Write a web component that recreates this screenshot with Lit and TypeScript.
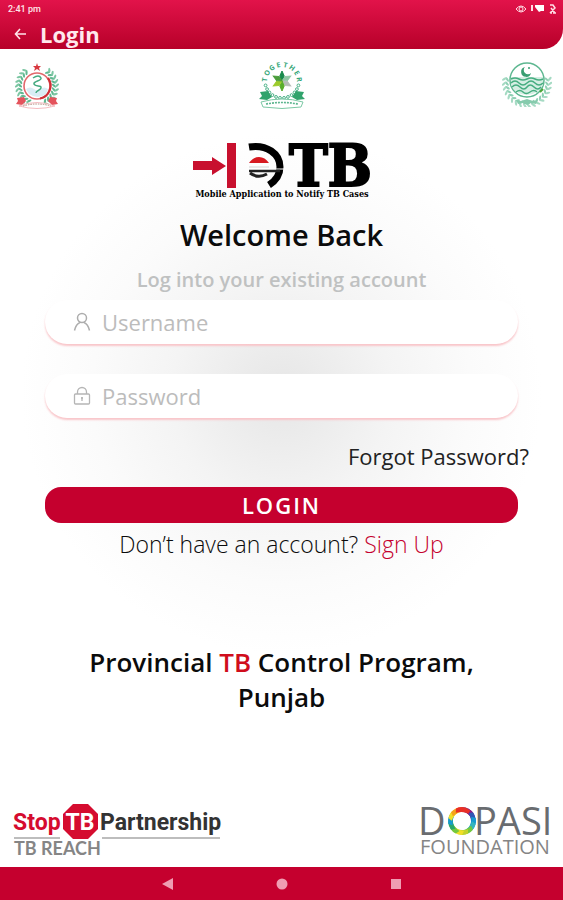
import { LitElement, html, css, svg } from "lit";
import { customElement } from "lit/decorators.js";

const ring = (n: number, start: number, end: number, draw: (a: number, i: number) => unknown) =>
  Array.from({ length: n }, (_, i) => draw(start + ((end - start) * i) / (n - 1), i));

const at = (cx: number, cy: number, r: number, deg: number) => {
  const t = (deg * Math.PI) / 180;
  return { x: cx + r * Math.cos(t), y: cy + r * Math.sin(t) };
};

const leaf = (cx: number, cy: number, r: number, a: number, tilt: number, fill: string) => {
  const p = at(cx, cy, r, a);
  return svg`<ellipse cx=${p.x} cy=${p.y} rx="2.6" ry="1.1" fill=${fill}
    transform="rotate(${a + tilt} ${p.x} ${p.y})"/>`;
};

@customElement("health-seal")
export class HealthSeal extends LitElement {
  static styles = css`:host, svg { display: block; }`;
  render() {
    return html`<svg width="48" height="50" viewBox="0 0 48 50" role="img" aria-label="Health department seal">
      ${ring(10, 118, 232, (a) => svg`${leaf(24, 25, 17, a, 40, "#5fb890")}${leaf(24, 25, 20, a, -40, "#7cc6a3")}`)}
      ${ring(10, -52, 62, (a) => svg`${leaf(24, 25, 17, a, 40, "#5fb890")}${leaf(24, 25, 20, a, -40, "#7cc6a3")}`)}
      <circle cx="24" cy="25" r="13" fill="#fff" stroke="#e2686c" stroke-width="1.6"/>
      <path d="M35 17a13 13 0 0 1-8 20.500" fill="none" stroke="#cf3038" stroke-width="2.200"/>
      <path d="M13 28q4-3 8 0t7 0 7 0l-2 5q-8 6-17 0z" fill="#d9edf5"/>
      <path d="M20 17q6-4 8 0c1 3-8 3-7 6s8 1 7 4-5 2-5 5" fill="none" stroke="#45aa80" stroke-width="1.500"/>
      <path d="M24 2l1 3h3l-2 2 1 3-3-2-3 2 1-3-2-2h3z" fill="#d83840"/>
      <path d="M4 37l7-1 2 4-4 4-6-1 2-3zM44 37l-7-1-2 4 4 4 6-1-2-3z" fill="#e4535c"/>
      <path d="M6 45q18-7 36 0-18 5-36 0z" fill="#fff" stroke="#f3a9b0" stroke-width=".8"/>
      <path d="M10 45q14-4 28 0" fill="none" stroke="#b5897b" stroke-width="1" stroke-dasharray="1.500 1"/>
    </svg>`;
  }
}

@customElement("together-seal")
export class TogetherSeal extends LitElement {
  static styles = css`
    :host, svg { display: block; }
    .letter { font: 700 7px "Open Sans", sans-serif; fill: #37a779; text-anchor: middle; }
  `;
  render() {
    const petals = ["#188a4c", "#8fc7a4", "#b5bdb6", "#58ad2b", "#9ccb2b", "#4b9d3c"];
    return html`<svg width="50" height="50" viewBox="0 0 50 50" role="img" aria-label="Together seal">
      ${ring(8, -172, -8, (a, i) => {
        const p = at(25, 21, 15, a);
        return svg`<text class="letter" x=${p.x} y=${p.y} transform="rotate(${a + 90} ${p.x} ${p.y})">${"TOGETHER"[i]}</text>`;
      })}
      ${ring(12, 15, 165, (a) => {
        const p = at(25, 20, 17, a);
        return svg`<circle cx=${p.x} cy=${p.y} r="1.400" fill="none" stroke="#47b085" stroke-width="1"/>`;
      })}
      ${petals.map((c, i) => svg`<path d="M25 20l-2.200-5 2.200-5 2.200 5z" fill=${c} stroke=${c} transform="rotate(${i * 60} 25 20)"/>`)}
      <path d="M3 31l8-1 4 6-5 3-8-1 3-3zM47 31l-8-1-4 6 5 3 8-1-3-3z" fill="#31a36c"/>
      <path d="M4 41q21-6 42 0l-2 5q-19 3-38 0z" fill="#fff" stroke="#7cc9a5"/>
      <path d="M9 43q16-3 32 0" fill="none" stroke="#5cb58f" stroke-width="1.600" stroke-dasharray="2 1"/>
    </svg>`;
  }
}

@customElement("punjab-seal")
export class PunjabSeal extends LitElement {
  static styles = css`:host, svg { display: block; }`;
  render() {
    return html`<svg width="50" height="46" viewBox="0 0 50 46" role="img" aria-label="Government of Punjab seal">
      ${ring(9, 95, 190, (a) => svg`${leaf(25, 22, 20, a, 50, "#8fd0b4")}${leaf(25, 22, 23, a, -40, "#a5dac3")}`)}
      ${ring(9, -10, 85, (a) => svg`${leaf(25, 22, 20, a, 50, "#8fd0b4")}${leaf(25, 22, 23, a, -40, "#a5dac3")}`)}
      <circle cx="25" cy="19" r="17" fill="#fff" stroke="#5db790" stroke-width="1.500"/>
      <path d="M9 16h32v8q-4 9-16 10Q12 33 9 24z" fill="#d5eee3"/>
      <path d="M9 18q4-2 8 0t8 0 8 0 8 0M9 22q4-4 8 0t8 0 8 0 8 0M10 26q4-4 8 0t7 0 7 0 7 0M14 31q4-3 7 0t7 0 7 0" fill="none" stroke="#46ad80" stroke-width="1.500"/>
      <path d="M23 6a5 5 0 1 0 6 6 4 4 0 1 1-6-6z" fill="#399f72"/>
      <circle cx="27" cy="7" r="1" fill="#399f72"/>
      <path d="M14 39l5 1 6-2 6 2 5-1-2 4-5-1-4 2-4-2-5 1z" fill="#86cbad"/>
      <path d="M38 31l3-3" stroke="#4aa536" stroke-width="2"/>
    </svg>`;
  }
}

@customElement("app-root")
export class AppRoot extends LitElement {
  static styles = css`
    :host {
      display: flex;
      flex-direction: column;
      min-height: 100vh;
      background: #fff;
      color: #0b0b0b;
      font-family: "Open Sans", sans-serif;
    }
    * { box-sizing: border-box; }
    svg { display: block; overflow: visible; }
    a { color: inherit; text-decoration: none; }
    button { border: 0; padding: 0; background: none; color: inherit; font: inherit; cursor: pointer; }

    .header {
      height: 49px;
      background: linear-gradient(#e2134a, #b70029);
      border-bottom-right-radius: 20px;
      color: #fff;
    }
    .status {
      display: flex;
      justify-content: space-between;
      align-items: center;
      height: 18px;
      padding: 0 6px 0 8px;
      font: 500 9px/18px Roboto, sans-serif;
      color: #ffe4ea;
    }
    .title-row { display: flex; align-items: center; gap: 12px; height: 31px; padding-left: 14px; }
    .title { margin: 0; font-size: 22px; font-weight: 700; line-height: 32px; color: #ffe8ed; }

    .main {
      flex: 1;
      display: flex;
      flex-direction: column;
      align-items: center;
      background: radial-gradient(circle at 50% 345px, #e6e6e6, #f4f4f4 110px, #fbfbfb 190px, #fff 260px);
    }
    .seals { display: flex; justify-content: space-between; align-self: stretch; height: 50px; margin-top: 12px; padding: 0 11px 0 13px; }
    .brand { margin-top: 31px; }
    .slab { font: 700 58px "DejaVu Serif Condensed", "DejaVu Serif", serif; fill: #000; stroke: #000; stroke-width: 2px; }
    .tagline { font: 700 9px "DejaVu Serif Condensed", "DejaVu Serif", serif; fill: #000; text-anchor: middle; }
    .welcome { margin: 16px 0 0; font-size: 29px; font-weight: 600; line-height: 38px; }
    .lead { margin: 12px 0 0; font-size: 20px; font-weight: 600; line-height: 28px; color: #bfc1c1; }

    .form { display: flex; flex-direction: column; align-self: stretch; margin-top: 6px; padding: 0 45px; }
    .field {
      display: flex;
      align-items: center;
      gap: 11px;
      height: 44px;
      margin-bottom: 30px;
      padding: 0 28px;
      border-radius: 22px;
      background: #fff;
      box-shadow: 0 2px 2px #f9c6ca;
    }
    .input {
      flex: 1;
      min-width: 0;
      border: 0;
      outline: 0;
      padding: 0;
      background: none;
      color: #333;
      font: 400 22px/30px "Open Sans", sans-serif;
    }
    .input::placeholder { color: #bcbcbc; opacity: 1; }
    .forgot { align-self: flex-end; margin: -7px -11px 16px 0; font-size: 22px; line-height: 30px; color: #222; }
    .login {
      height: 36px;
      border-radius: 16px;
      background: #c5002e;
      color: #fff;
      font-size: 22px;
      font-weight: 600;
      line-height: 36px;
      letter-spacing: 2px;
    }
    .signup { margin: 5px 0 0; font-size: 23px; font-weight: 300; line-height: 32px; text-align: center; }
    .signup-link { color: #c5002e; }
    .program { max-width: 440px; margin: 85px 0 0; font-size: 26px; font-weight: 600; line-height: 35px; text-align: center; }
    .accent { color: #d00d1c; }

    .partners {
      display: flex;
      justify-content: space-between;
      align-items: flex-end;
      align-self: stretch;
      margin-top: auto;
      padding: 0 10px 8px 13px;
    }
    .stop { font: 700 23px Roboto, sans-serif; }
    .stop-badge { text-anchor: middle; }
    .reach { font: 700 18px Lato, sans-serif; fill: #858585; }
    .dopasi { font: 400 38px "Open Sans", sans-serif; fill: #696c70; }
    .foundation { font: 400 20px "Open Sans", sans-serif; fill: #858585; }

    .nav { display: flex; justify-content: center; align-items: center; gap: 98px; height: 33px; background: #c5002e; color: #ef9db2; }
    .nav-button { display: grid; place-items: center; width: 16px; height: 16px; }
  `;

  private partnerLogo() {
    return html`<svg width="208" height="56" viewBox="0 0 208 56" role="img" aria-label="Stop TB Partnership, TB Reach">
      <text class="stop" x="0" y="27" fill="#d50c2f">Stop</text>
      <path d="M60 1h15l10 10v15l-10 10H60l-10-10V11z" fill="#d50c2f"/>
      <text class="stop stop-badge" x="67" y="27" fill="#fff">TB</text>
      <text class="stop" x="87" y="27" fill="#333">Partnership</text>
      <path d="M1 35h46M89 35h118" stroke="#bdbdbd" stroke-width="2"/>
      <text class="reach" x="1" y="52">TB REACH</text>
    </svg>`;
  }

  private dopasiLogo() {
    const colors = ["#76206f", "#8c1c86", "#3157b5", "#159bd0", "#36b5bd", "#74c83e", "#c4d22c", "#f1df27", "#74c83e", "#2aa76a", "#159bd0", "#f1df27", "#f5a31b", "#e92f26"];
    return html`<svg width="132" height="56" viewBox="0 0 132 56" role="img" aria-label="Dopasi Foundation">
      <text class="dopasi" x="-3" y="32">D</text>
      ${colors.map((c, i) => svg`<path d="M41 4q8 0 12 8l-3 2q-4-5-11-6z" fill=${c} transform="rotate(${(i * 360) / 14} 41 18)"/>`)}
      <text class="dopasi" x="53" y="32">PASI</text>
      <text class="foundation" x="-1" y="51">FOUNDATION</text>
    </svg>`;
  }

  render() {
    return html`
      <header class="header">
        <div class="status">
          <span>2:41 pm</span>
          <svg width="42" height="12" viewBox="0 0 42 12" fill="none" stroke="#ffdce4" aria-hidden="true">
            <path d="M1 6q5-6 10 0-5 6-10 0z"/><circle cx="6" cy="6" r="2"/>
            <path d="M17 2v6" stroke-width="2"/>
            <path d="M20 2h9v6h-3l-2 1-4-5z" fill="#fff" stroke="none"/>
            <path d="M35 2h3l2 3-5 5M36 5l4 5M35 10h2M38 10h3" stroke-width="1.500"/>
          </svg>
        </div>
        <div class="title-row">
          <button class="back" aria-label="Back">
            <svg width="14" height="14" viewBox="0 0 14 14" fill="none" stroke="#ffe4ea" stroke-width="1.600"><path d="M12 7H2M6 2L1.500 7 6 12"/></svg>
          </button>
          <h1 class="title">Login</h1>
        </div>
      </header>
      <main class="main">
        <div class="seals"><health-seal></health-seal><together-seal></together-seal><punjab-seal></punjab-seal></div>
        <svg class="brand" width="180" height="58" viewBox="0 0 180 58" role="img" aria-label="TB case notification">
          <path d="M1 19h19v-4l14 9-14 9v-5H1z" fill="#c8102e"/>
          <path d="M35 1h9v45h-9z" fill="#c8102e"/>
          <path d="M57 5C75 2 88 12 88 25q0 11-11 18" fill="none" stroke="#000" stroke-width="7"/>
          <path d="M57 21q4-6 10-6t10 6z" fill="#d71920"/>
          <path d="M57 25h20" stroke="#d5d5d5" stroke-width="1"/>
          <path d="M57 27h36" stroke="#fff" stroke-width="1"/>
          <path d="M57 29h31" stroke="#222" stroke-width="2.500"/>
          <path d="M58 31q8 6 17 1" fill="none" stroke="#222" stroke-width="3"/>
          <text class="slab" x="97" y="44">TB</text>
          <text class="tagline" x="90" y="55">Mobile Application to Notify TB Cases</text>
        </svg>
        <h2 class="welcome">Welcome Back</h2>
        <p class="lead">Log into your existing account</p>
        <form class="form" @submit=${(e: Event) => e.preventDefault()}>
          <div class="field">
            <label for="username" aria-label="Username">
              <svg width="18" height="20" viewBox="0 0 18 20" fill="none" stroke="#adadad" stroke-width="1.500"><circle cx="9" cy="6" r="4.500"/><path d="M1.500 18.500Q3 12 7 10.500M16.500 18.500Q15 12 11 10.500"/></svg>
            </label>
            <input class="input" id="username" type="text" placeholder="Username" />
          </div>
          <div class="field">
            <label for="password" aria-label="Password">
              <svg width="18" height="20" viewBox="0 0 18 20" fill="none" stroke="#b5b5b5" stroke-width="1.300"><rect x="1.500" y="8" width="15" height="10" rx="1"/><path d="M4.500 8V6a4.500 4.500 0 0 1 9 0v2M9 11v4M8 12h2"/></svg>
            </label>
            <input class="input" id="password" type="password" placeholder="Password" />
          </div>
          <a class="forgot" href="#forgot">Forgot Password?</a>
          <button class="login" type="submit">LOGIN</button>
          <p class="signup">Don’t have an account? <a class="signup-link" href="#signup">Sign Up</a></p>
        </form>
        <p class="program">Provincial <span class="accent">TB</span> Control Program, Punjab</p>
        <footer class="partners">${this.partnerLogo()}${this.dopasiLogo()}</footer>
      </main>
      <nav class="nav" aria-label="System navigation">
        <button class="nav-button" aria-label="Back"><svg width="12" height="12" viewBox="0 0 12 12" fill="currentColor"><path d="M0 6L11 0v12z"/></svg></button>
        <button class="nav-button" aria-label="Home"><svg width="12" height="12" viewBox="0 0 12 12" fill="currentColor"><circle cx="6" cy="6" r="5.500"/></svg></button>
        <button class="nav-button" aria-label="Recent apps"><svg width="12" height="12" viewBox="0 0 12 12" fill="currentColor"><path d="M1 1h10v10H1z"/></svg></button>
      </nav>
    `;
  }
}
